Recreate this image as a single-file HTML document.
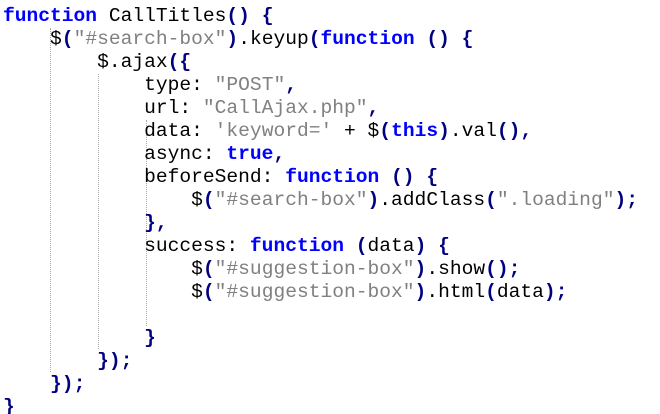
<!DOCTYPE html>
<html><head><style>
html,body{margin:0;padding:0;background:#fff;width:660px;height:414px;overflow:hidden;position:relative}
pre{position:absolute;left:3px;top:5px;margin:0;font-family:"Liberation Mono",monospace;font-size:19.6px;line-height:23px;color:#000}
.k{color:#0000ff;font-weight:bold}
.s{color:#808080}
.p{color:#000080;font-weight:bold}
.g{position:absolute;width:0;border-left:1px dotted #aaa}
</style></head><body>
<div class="g" style="left:50px;top:28px;height:344px"></div>
<div class="g" style="left:98px;top:74px;height:275px"></div>
<div class="g" style="left:146px;top:120px;height:206px"></div>
<pre><span class="k">function</span> CallTitles<span class="p">()</span> <span class="p">{</span>
    $<span class="p">(</span><span class="s">"#search-box"</span><span class="p">)</span>.keyup<span class="p">(</span><span class="k">function</span> <span class="p">()</span> <span class="p">{</span>
        $.ajax<span class="p">({</span>
            type: <span class="s">"POST"</span><span class="p">,</span>
            url: <span class="s">"CallAjax.php"</span><span class="p">,</span>
            data: <span class="s">'keyword='</span> + $<span class="p">(</span><span class="k">this</span><span class="p">)</span>.val<span class="p">(),</span>
            async: <span class="k">true</span><span class="p">,</span>
            beforeSend: <span class="k">function</span> <span class="p">()</span> <span class="p">{</span>
                $<span class="p">(</span><span class="s">"#search-box"</span><span class="p">)</span>.addClass<span class="p">(</span><span class="s">".loading"</span><span class="p">);</span>
            <span class="p">},</span>
            success: <span class="k">function</span> <span class="p">(</span>data<span class="p">)</span> <span class="p">{</span>
                $<span class="p">(</span><span class="s">"#suggestion-box"</span><span class="p">)</span>.show<span class="p">();</span>
                $<span class="p">(</span><span class="s">"#suggestion-box"</span><span class="p">)</span>.html<span class="p">(</span>data<span class="p">);</span>

            <span class="p">}</span>
        <span class="p">});</span>
    <span class="p">});</span>
<span class="p">}</span></pre>
</body></html>
